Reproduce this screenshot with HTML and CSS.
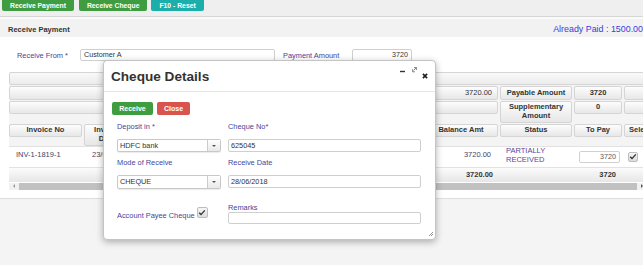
FILE: index.html
```html
<!DOCTYPE html>
<html>
<head>
<meta charset="utf-8">
<title>Receive Payment</title>
<link rel="stylesheet" href="styles.css">
</head>
<body>
<div class="toolbar">
  <button class="tb-btn green gap5">Receive Payment</button>
  <button class="tb-btn green gap4">Receive Cheque</button>
  <button class="tb-btn teal">F10 - Reset</button>
</div>
<div class="panel">
  <div class="panel-head">
    <span class="panel-title">Receive Payment</span>
    <span class="paid">Already Paid : 1500.00</span>
  </div>
  <div class="panel-body">
    <div class="form-row">
      <span class="lbl lbl-from">Receive From *</span>
      <div class="inp inp-from">Customer A</div>
      <span class="lbl lbl-amt">Payment Amount</span>
      <div class="inp inp-amt">3720</div>
    </div>
    <div class="grid-wrap">
      <div class="row r0"><div class="cell span-all"></div></div>
      <div class="row r1">
        <div class="cell span-left num">3720.00</div>
        <div class="cell hcell">Payable Amount</div>
        <div class="cell hcell">3720</div>
        <div class="cell"></div>
      </div>
      <div class="row r2">
        <div class="cell span-left short"></div>
        <div class="cell hcell">Supplementary Amount</div>
        <div class="cell hcell short">0</div>
        <div class="cell short"></div>
      </div>
      <div class="row head">
        <div class="cell hcell">Invoice No</div>
        <div class="cell hcell">Invoice Date</div>
        <div class="cell hcell"></div>
        <div class="cell hcell"></div>
        <div class="cell hcell"></div>
        <div class="cell hcell">Balance Amt</div>
        <div class="cell hcell">Status</div>
        <div class="cell hcell">To Pay</div>
        <div class="cell hcell left">Select</div>
      </div>
      <div class="row data">
        <div class="dcell">INV-1-1819-1</div>
        <div class="dcell date">23/06/2018</div>
        <div class="dcell"></div>
        <div class="dcell"></div>
        <div class="dcell"></div>
        <div class="dcell num">3720.00</div>
        <div class="dcell status">PARTIALLY<br>RECEIVED</div>
        <div class="dcell"><div class="pay-inp">3720</div></div>
        <div class="dcell"><span class="chk chk-row"><svg width="8" height="7" viewBox="0 0 8 7"><path d="M1.2 3.8L3 5.6L6.8 1.4" stroke="#333" stroke-width="1.4" fill="none"/></svg></span></div>
      </div>
      <div class="row totals">
        <div class="tcell"></div>
        <div class="tcell"></div>
        <div class="tcell"></div>
        <div class="tcell"></div>
        <div class="tcell"></div>
        <div class="tcell num">3720.00</div>
        <div class="tcell"></div>
        <div class="tcell num pay">3720</div>
        <div class="tcell"></div>
      </div>
      <div class="hscroll">
        <span class="arr arr-l"></span>
        <span class="thumb"></span>
        <span class="arr arr-r"></span>
      </div>
    </div>
  </div>
</div>

<div class="modal">
  <div class="modal-head">
    <h3 class="modal-title">Cheque Details</h3>
    <div class="modal-tools">
      <svg class="ic-min" width="5" height="3" viewBox="0 0 5 3"><rect x="0" y="0.8" width="5" height="1.4" fill="#333"/></svg>
      <svg class="ic-max" width="6" height="6" viewBox="0 0 6 6"><path d="M3 0.6H5.4V3 M5.4 0.6L2.6 3.4 M1.6 2.2V4.8H4" stroke="#666" stroke-width="0.8" fill="none"/></svg>
      <svg class="ic-close" width="6" height="6" viewBox="0 0 6 6"><path d="M0.9 0.9L5.1 5.1M5.1 0.9L0.9 5.1" stroke="#222" stroke-width="1.7"/></svg>
    </div>
  </div>
  <div class="modal-body">
    <div class="btns">
      <button class="btn green w-recv">Receive</button>
      <button class="btn red">Close</button>
    </div>
    <div class="fgrid">
      <span class="flbl r-lbl1">Deposit in *</span>
      <span class="flbl r-lbl1">Cheque No*</span>
      <div class="select r-ctl1"><span class="sel-text">HDFC bank</span><span class="sel-arrow"><span class="caret"></span></span></div>
      <div class="finp r-ctl1">625045</div>
      <span class="flbl r-lbl2">Mode of Receive</span>
      <span class="flbl r-lbl2">Receive Date</span>
      <div class="select r-ctl2"><span class="sel-text">CHEQUE</span><span class="sel-arrow"><span class="caret"></span></span></div>
      <div class="finp r-ctl2">28/06/2018</div>
      <div class="payee">
        <span class="flbl">Account Payee Cheque</span>
        <span class="chk chk-payee"><svg width="8" height="7" viewBox="0 0 8 7"><path d="M1.2 3.8L3 5.6L6.8 1.4" stroke="#333" stroke-width="1.4" fill="none"/></svg></span>
      </div>
      <div class="remarks">
        <span class="flbl">Remarks</span>
        <div class="finp rem-inp"></div>
      </div>
    </div>
    <div class="grip-row">
      <svg width="5" height="5" viewBox="0 0 5 5"><path d="M5 1L1 5M5 3L3 5" stroke="#777" stroke-width="0.8"/></svg>
    </div>
  </div>
</div>
</body>
</html>
```

FILE: styles.css
```css
* { box-sizing: border-box; }
html, body { margin: 0; padding: 0; }
body {
  width: 643px;
  height: 265px;
  overflow: hidden;
  position: relative;
  background: #f3f4f3;
  font-family: "Liberation Sans", Arial, sans-serif;
  font-size: 7.5px;
  color: #333;
}

/* toolbar */
.toolbar {
  height: 17px;
  background: #efefef;
  border-bottom: 1px solid #d6d6d6;
  display: flex;
  align-items: flex-start;
  padding-left: 2px;
}
.tb-btn {
  height: 11px;
  padding: 0 8px;
  border: 0;
  border-radius: 0 0 2px 2px;
  color: #fff;
  font: bold 6.8px "Liberation Sans", Arial, sans-serif;
  line-height: 11px;
}
.gap5 { margin-right: 5px; }
.gap4 { margin-right: 4px; }
.green { background: #409c40; }
.teal { background: #1baeab; }
.red { background: #d9534f; }

/* panel */
.panel {
  border-top: 2px solid #fafafa;
  background: #fff;
}
.panel-head {
  height: 18px;
  background: #f2f2f2;
  display: flex;
  justify-content: space-between;
  align-items: flex-end;
  padding: 0 0 3px 8px;
}
.panel-title { font-weight: bold; font-size: 7.5px; color: #333; }
.paid { color: #3b3bdf; font-size: 8.9px; line-height: 10px; white-space: nowrap; }

.panel-body {
  padding: 12px 0 8px 9px;
  border-bottom: 1px solid #dedede;
}
.form-row {
  display: flex;
  align-items: center;
  margin-left: 8px;
  height: 12px;
}
.lbl { color: #45459a; font-size: 7.4px; }
.lbl-from { width: 63px; }
.lbl-amt { width: 69px; margin-left: 8px; }
.inp {
  height: 12px;
  border: 1px solid #cfcfcf;
  border-radius: 2px;
  background: #fff;
  font-size: 7.2px;
  line-height: 10px;
  color: #333;
  padding: 0 3px;
}
.inp-from { width: 195px; }
.inp-amt { width: 60px; text-align: right; }

/* grid */
.grid-wrap {
  margin-top: 11px;
  overflow: hidden;
}
.row {
  display: grid;
  grid-template-columns: 73px 46px 94px 95px 97px 74px 72px 48px 50px;
  column-gap: 2px;
  width: 665px;
  background: #f4f4f4;
}
.r0, .r1, .r2 { padding-bottom: 1px; }
.head { align-items: start; }
.r2 { align-items: start; }
.cell {
  background: linear-gradient(#fdfdfd, #e7e7e7);
  border: 1px solid #d5d5d5;
  border-radius: 2px;
  min-height: 13px;
  line-height: 8.5px;
  padding: 1.5px 2px;
}
.span-all { grid-column: 1 / -1; height: 13px; background: linear-gradient(#f9f9f9, #ececec); }
.span-left { grid-column: 1 / 7; }
.short { height: 13px; }
.hcell { font-weight: bold; text-align: center; color: #333; }
.hcell.left { text-align: left; padding-left: 4px; white-space: nowrap; overflow: hidden; }
.cell.num { text-align: right; padding-right: 5px; color: #333; }

.data {
  background: #fff;
  border-top: 1px solid #e2e2e2;
  border-bottom: 1px solid #e2e2e2;
  height: 22px;
}
.dcell {
  padding: 4px 0 0 7px;
  line-height: 8.5px;
  color: #44446a;
  white-space: nowrap;
}
.dcell.date { padding-left: 8px; }
.dcell.num { text-align: right; padding-right: 7px; }
.dcell.status { padding: 0.5px 0 0 6px; color: #5d3f9e; }
.pay-inp {
  margin: 0 0 0 -2px;
  width: 41px;
  height: 12px;
  border: 1px solid #d0d0d0;
  border-radius: 2px;
  text-align: right;
  padding-right: 3px;
  line-height: 10px;
  font-size: 7.2px;
  color: #555;
}
.chk {
  display: inline-flex;
  align-items: center;
  justify-content: center;
  width: 10px;
  height: 10px;
  border: 1px solid #bdbdbd;
  border-radius: 2px;
  background: linear-gradient(#f6f6f6, #dcdcdc);
}
.chk-row { margin: 1px 0 0 -3px; }

.totals {
  height: 14px;
  background: linear-gradient(#fbfbfb, #e6e6e6);
}
.tcell { font-weight: bold; line-height: 14px; color: #333; }
.tcell.num { text-align: right; padding-right: 5px; }
.tcell.pay { padding-right: 6px; }

.hscroll {
  margin-top: 1px;
  height: 7px;
  width: 636px;
  background: #f1f1f1;
  display: flex;
  align-items: center;
  padding: 0 2px 0 4px;
}
.arr { width: 0; height: 0; border-top: 2px solid transparent; border-bottom: 2px solid transparent; }
.arr-l { border-right: 2.5px solid #999; }
.arr-r { border-left: 2.5px solid #555; }
.thumb { flex: 1; height: 7px; background: #c1c1c1; margin: 0 4px 0 4px; }

/* modal */
.modal {
  position: absolute;
  left: 103px;
  top: 60px;
  width: 333px;
  height: 180px;
  background: #fff;
  border: 1px solid #c4c4c4;
  border-radius: 4px;
  box-shadow: 0 2px 7px rgba(0, 0, 0, 0.3);
  display: flex;
  flex-direction: column;
}
.modal-head {
  height: 31px;
  border-bottom: 1px solid #e5e5e5;
  display: flex;
  justify-content: space-between;
  align-items: flex-start;
  padding: 0 7px 0 7px;
}
.modal-title {
  margin: 8px 0 0 0;
  font-size: 13.6px;
  line-height: 16px;
  font-weight: bold;
  color: #333;
}
.modal-tools { display: flex; align-items: flex-start; }
.ic-min { margin-top: 9px; }
.ic-max { margin: 6px 0 0 6px; }
.ic-close { margin: 12px 0 0 5px; }

.modal-body {
  flex: 1;
  padding: 10px 0 0 8px;
  display: flex;
  flex-direction: column;
}
.btns { display: flex; gap: 4px; }
.btn {
  height: 13px;
  border: 0;
  border-radius: 2px;
  padding: 0;
  color: #fff;
  font: bold 7px "Liberation Sans", Arial, sans-serif;
  width: 33px;
}
.btn.green { background: #3f9d3f; }
.btn.red { background: #d9534f; }
.w-recv { width: 41px; }

.fgrid {
  display: grid;
  grid-template-columns: 104px 193px;
  column-gap: 7px;
  margin-left: 5px;
}
.flbl { color: #45459a; font-size: 7.4px; line-height: 9px; }
.r-lbl1 { margin-top: 7px; }
.r-ctl1 { margin-top: 8px; }
.r-lbl2 { margin-top: 6px; }
.r-ctl2 { margin-top: 8px; }

.select {
  height: 13px;
  border: 1px solid #c8c8c8;
  border-radius: 2px;
  background: #fff;
  display: flex;
  box-shadow: 0 1px 1px rgba(0, 0, 0, 0.08);
}
.r-ctl2.select { height: 14px; }
.sel-text { flex: 1; font-size: 7.3px; line-height: 11px; padding-left: 2px; color: #333; }
.sel-arrow {
  width: 13px;
  border-left: 1px solid #ccc;
  background: linear-gradient(#fff, #e9e9e9);
  display: flex;
  align-items: center;
  justify-content: center;
}
.caret {
  width: 0; height: 0;
  border-left: 2px solid transparent;
  border-right: 2px solid transparent;
  border-top: 2.5px solid #555;
}
.finp {
  height: 13px;
  border: 1px solid #cfcfcf;
  border-radius: 2px;
  font-size: 7.3px;
  line-height: 11px;
  padding-left: 2px;
  color: #333;
}
.payee {
  display: flex;
  align-items: flex-end;
  align-self: end;
  margin-bottom: 4px;
}
.chk-payee { width: 11px; height: 11px; margin: 0 0 2px 2px; }
.remarks { margin-top: 14px; display: flex; flex-direction: column; }
.rem-inp { height: 12px; }

.grip-row {
  flex: 1;
  display: flex;
  justify-content: flex-end;
  align-items: flex-end;
  padding: 0 2px 3px 0;
}
```
